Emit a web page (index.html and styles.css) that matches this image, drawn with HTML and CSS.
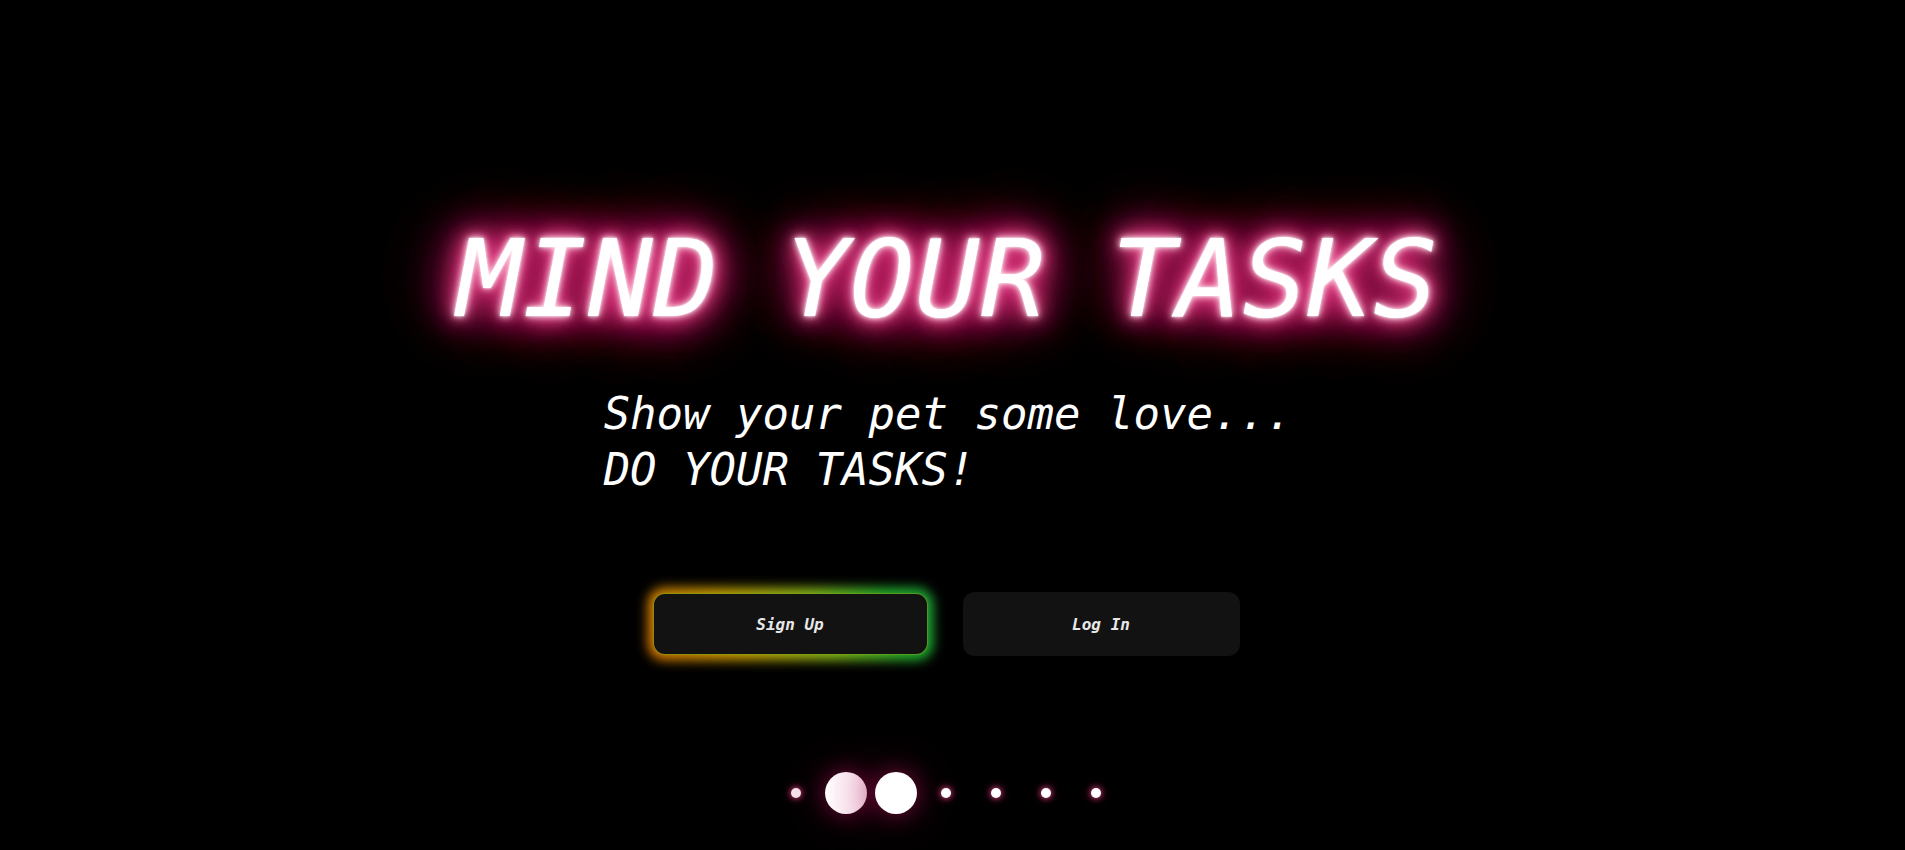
FILE: index.html
```html
<!DOCTYPE html>
<html lang="en">
<head>
<meta charset="utf-8">
<title>Mind Your Tasks</title>
<link rel="stylesheet" href="styles.css">
</head>
<body>
<main class="hero">
  <h1 class="title">MIND YOUR TASKS</h1>
  <p class="tagline">Show your pet some love...<br>DO YOUR TASKS!</p>
  <div class="actions">
    <span class="glow-wrap"><button class="btn btn-glow" type="button">Sign Up</button></span>
    <button class="btn" type="button">Log In</button>
  </div>
  <div class="dots">
    <span class="cell"><span class="dot dot-small dot-tint"></span></span>
    <span class="cell"><span class="dot dot-big dot-fade"></span></span>
    <span class="cell"><span class="dot dot-big"></span></span>
    <span class="cell"><span class="dot dot-small"></span></span>
    <span class="cell"><span class="dot dot-small"></span></span>
    <span class="cell"><span class="dot dot-small"></span></span>
    <span class="cell"><span class="dot dot-small"></span></span>
  </div>
</main>
</body>
</html>
```

FILE: styles.css
```css
html, body {
  margin: 0;
  height: 100%;
  background: #000;
  overflow: hidden;
}

body {
  font-family: "DejaVu Sans Mono", "Liberation Mono", monospace;
  color: #fff;
}

.hero {
  display: flex;
  flex-direction: column;
  align-items: center;
  padding-top: 214px;
  padding-right: 9px;
}

.title {
  margin: 0;
  font-size: 107px;
  line-height: 130px;
  letter-spacing: 1px;
  font-weight: normal;
  font-style: italic;
  color: #fff;
  white-space: nowrap;
  text-shadow:
    0 0 2px #fff,
    0 0 6px #fff0f5,
    0 0 12px #ffa0c4,
    0 0 20px #e83a82,
    0 0 26px #d82a74,
    0 0 34px #c8246a,
    0 0 42px #bc2064,
    0 0 52px #ae1c5c,
    0 0 64px #981852,
    0 0 80px #801446,
    0 0 100px #661038,
    0 0 130px #4c0a28,
    0 0 170px #34061c,
    0 0 220px #22040f;
}

.tagline {
  margin: 42px 0 0;
  font-size: 44px;
  line-height: 56px;
  font-style: italic;
  text-align: left;
  color: #fff;
  white-space: nowrap;
}

.actions {
  display: flex;
  gap: 34px;
  margin-top: 94px;
  margin-right: 5px;
}

.glow-wrap {
  position: relative;
  display: block;
}

.glow-wrap::before {
  content: "";
  position: absolute;
  inset: -4px;
  border-radius: 16px;
  background: linear-gradient(70deg, #e07800 0%, #d2a400 30%, #8cbe18 60%, #22b82e 85%, #1ea83a 100%);
  filter: blur(6px);
}

.btn {
  position: relative;
  display: block;
  width: 277px;
  height: 64px;
  box-sizing: border-box;
  border: 0;
  border-radius: 12px;
  background: #121212;
  color: #e8e8e8;
  font-family: "DejaVu Sans Mono", monospace;
  font-size: 16px;
  font-weight: bold;
  font-style: italic;
  cursor: pointer;
  padding: 0;
}

.btn-glow {
  width: 273px;
  height: 60px;
  margin: 2px;
  border-radius: 11px;
  box-shadow: 0 0 0 1px rgba(120, 160, 20, 0.6);
}

.dots {
  display: flex;
  margin-top: 116px;
  margin-right: 5px;
  height: 42px;
  align-items: center;
}

.cell {
  width: 50px;
  display: flex;
  justify-content: center;
  align-items: center;
}

.dot {
  display: block;
  border-radius: 50%;
  background: #fff;
}

.dot-small {
  width: 10px;
  height: 10px;
  box-shadow: 0 0 6px #ff4f98, 0 0 12px rgba(200, 30, 100, 0.5);
}

.dot-tint {
  background: #fde8f1;
}

.dot-big {
  width: 42px;
  height: 42px;
  box-shadow: 0 0 22px rgba(170, 20, 85, 0.6), 0 0 50px rgba(110, 10, 55, 0.6);
}

.dot-fade {
  background: linear-gradient(90deg, #ffffff 0%, #fbe6ef 60%, #f6d0e0 100%);
}
```
